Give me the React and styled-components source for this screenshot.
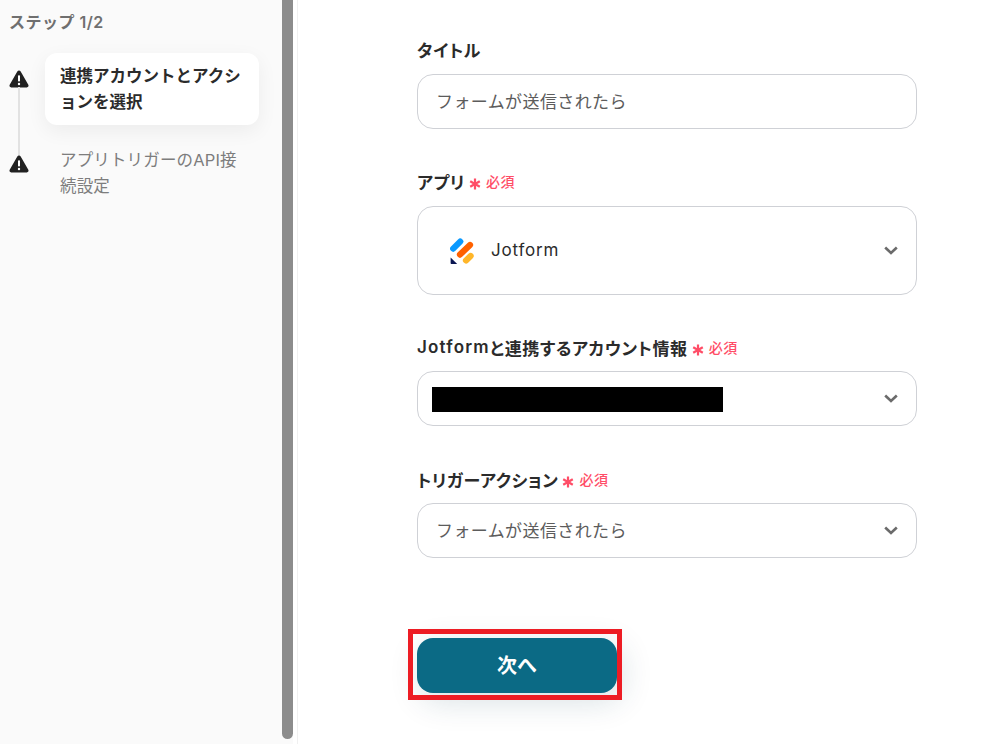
import React from 'react'
import styled, { createGlobalStyle } from 'styled-components'

const GlobalStyle = createGlobalStyle`
    html, body {
        margin: 0;
        padding: 0;
        height: 744px;
        overflow: hidden;
        background: #fff;
        font-family: "Inter", "Noto Sans CJK JP", sans-serif;
    }
`

function Warning() {
    return (
        <WarnIcon viewBox="0 0 20 18">
            <path d="M10 .6c.7 0 1.3.4 1.7 1l7.6 13.2c.7 1.2-.1 2.6-1.5 2.6H2.2C.8 17.4 0 16 .7 14.8L8.3 1.6c.4-.6 1-1 1.7-1z" fill="#212121" />
            <rect x="9" y="5.2" width="2" height="6.4" rx="0.8" fill="#fff" />
            <circle cx="10" cy="14" r="1.2" fill="#fff" />
        </WarnIcon>
    )
}

function Chevron() {
    return (
        <ChevronIcon viewBox="0 0 14 9">
            <path d="M1.2 1.5 7 7l5.8-5.5" fill="none" stroke="#6b6b6b" strokeWidth="2.6" />
        </ChevronIcon>
    )
}

function JotformLogo() {
    return (
        <svg width="24" height="26" viewBox="0 0 24 26">
            <line x1="3.2" y1="10.6" x2="10.2" y2="3.6" stroke="#0a99ff" strokeWidth="6.2" strokeLinecap="round" />
            <line x1="10" y1="16.6" x2="20" y2="7" stroke="#ff6100" strokeWidth="6.2" strokeLinecap="round" />
            <line x1="16" y1="22.4" x2="20.6" y2="18" stroke="#ffb629" strokeWidth="6.2" strokeLinecap="round" />
            <path d="M.6 19.6 7.2 26H1.6C1 26 .6 25.6 .6 25z" fill="#0a1551" />
        </svg>
    )
}

function Required() {
    return (
        <>
            <StarIcon viewBox="0 0 12 12">
                <path d="M6 .4v11.2M1.2 3.2l9.6 5.6M10.8 3.2l-9.6 5.6" stroke="#ff4d67" strokeWidth="2.2" fill="none" />
            </StarIcon>
            <RequiredText>必須</RequiredText>
        </>
    )
}

export default function App() {
    return (
        <>
            <GlobalStyle />
            <Page>
                <Sidebar>
                    <StepTitle>ステップ 1/2</StepTitle>
                    <Steps>
                        <Step>
                            <IconCol $top={17} $line>
                                <Warning />
                            </IconCol>
                            <ActiveLabel>連携アカウントとアクションを選択</ActiveLabel>
                        </Step>
                        <Step>
                            <IconCol $top={8}>
                                <Warning />
                            </IconCol>
                            <StepLabel>アプリトリガーのAPI接続設定</StepLabel>
                        </Step>
                    </Steps>
                </Sidebar>
                <ScrollTrack>
                    <ScrollThumb />
                </ScrollTrack>
                <Main>
                    <Form>
                        <Field $mb={41}>
                            <Label $gap={14}>タイトル</Label>
                            <Box $h={55}>
                                <BoxText>フォームが送信されたら</BoxText>
                            </Box>
                        </Field>
                        <Field $mb={41}>
                            <Label $gap={14}>アプリ<Required /></Label>
                            <Box $h={89}>
                                <AppRow>
                                    <JotformLogo />
                                    <AppName>Jotform</AppName>
                                </AppRow>
                                <Chevron />
                            </Box>
                        </Field>
                        <Field $mb={42}>
                            <Label $gap={13}><LatinText>Jotform</LatinText>と連携するアカウント情報<Required /></Label>
                            <Box $h={55} $tight>
                                <Redacted />
                                <Chevron />
                            </Box>
                        </Field>
                        <Field $mb={80}>
                            <Label $gap={13}>トリガーアクション<Required /></Label>
                            <Box $h={55}>
                                <BoxText>フォームが送信されたら</BoxText>
                                <Chevron />
                            </Box>
                        </Field>
                        <ButtonWrap>
                            <NextButton>次へ</NextButton>
                            <Highlight />
                        </ButtonWrap>
                    </Form>
                </Main>
            </Page>
        </>
    )
}

const Page = styled.div`
    display: flex;
    width: 996px;
    height: 744px;
    overflow: hidden;
`

const Sidebar = styled.aside`
    width: 282px;
    flex-shrink: 0;
    box-sizing: border-box;
    background: #fafafa;
    padding: 11px 0 0 9px;
`

const StepTitle = styled.div`
    font-size: 16px;
    line-height: 22px;
    font-weight: 600;
    letter-spacing: 0.5px;
    color: #6f6f6f;
`

const Steps = styled.div`
    display: flex;
    flex-direction: column;
    gap: 22px;
    margin-top: 20px;
`

const Step = styled.div`
    display: flex;
    align-items: flex-start;
`

const IconCol = styled.div`
    position: relative;
    width: 20px;
    margin-right: 16px;
    flex-shrink: 0;
    padding-top: ${(p) => p.$top}px;
    display: flex;
    justify-content: center;

    ${(p) => p.$line && `
        &::after {
            content: '';
            position: absolute;
            left: 9px;
            top: 34px;
            width: 2px;
            height: 70px;
            background: #e2e2e2;
        }
    `}
`

const WarnIcon = styled.svg`
    width: 20px;
    height: 18px;
    display: block;
`

const ActiveLabel = styled.div`
    width: 214px;
    height: 72px;
    box-sizing: border-box;
    padding: 10px 15px;
    background: #fff;
    border-radius: 12px;
    box-shadow: 0 6px 20px rgba(0, 0, 0, 0.06);
    font-size: 16.5px;
    line-height: 26px;
    font-weight: 600;
    color: #2b2b2b;
`

const StepLabel = styled.div`
    width: 214px;
    box-sizing: border-box;
    padding: 0 15px;
    font-size: 16.5px;
    line-height: 26px;
    letter-spacing: 0.15px;
    color: #7d7d7d;
`

const ScrollTrack = styled.div`
    width: 11px;
    flex-shrink: 0;
    background: #fafafa;
`

const ScrollThumb = styled.div`
    width: 11px;
    height: 739px;
    background: #8c8c8c;
    border-radius: 0 0 6px 6px;
`

const Main = styled.main`
    flex: 1;
    margin-left: 4px;
    border-left: 1px solid #f0f0f0;
    padding: 38px 0 0 119px;
`

const Form = styled.div`
    width: 500px;
    display: flex;
    flex-direction: column;
`

const Field = styled.div`
    margin-bottom: ${(p) => p.$mb}px;
`

const Label = styled.div`
    display: flex;
    align-items: center;
    height: 22px;
    margin-bottom: ${(p) => p.$gap}px;
    font-size: 17px;
    font-weight: 600;
    font-feature-settings: "palt";
    letter-spacing: 0.6px;
    color: #2b2b2b;
`

const LatinText = styled.span`
    letter-spacing: 1.2px;
`

const StarIcon = styled.svg`
    width: 12px;
    height: 12px;
    margin: 5px 0 0 4px;
    flex-shrink: 0;
`

const RequiredText = styled.span`
    margin-left: 5px;
    font-size: 14px;
    font-weight: 500;
    letter-spacing: 0.6px;
    color: #ff4d67;
`

const Box = styled.div`
    height: ${(p) => p.$h}px;
    box-sizing: border-box;
    border: 1px solid #cfd1d6;
    border-radius: 16px;
    display: flex;
    align-items: center;
    justify-content: space-between;
    padding: 0 18px 0 ${(p) => (p.$tight ? 14 : 18)}px;
    background: #fff;
`

const BoxText = styled.span`
    font-size: 17px;
    letter-spacing: 0.4px;
    color: #5c5c5c;
    padding-bottom: 2px;
`

const AppRow = styled.div`
    display: flex;
    align-items: center;
    gap: 17px;
    padding-left: 14px;
`

const AppName = styled.span`
    font-size: 17px;
    letter-spacing: 0.8px;
    color: #2b2b2b;
    padding-bottom: 2px;
`

const Redacted = styled.div`
    width: 291px;
    height: 25px;
    margin-top: 2px;
    background: #000;
`

const ChevronIcon = styled.svg`
    width: 14px;
    height: 9px;
    display: block;
`

const ButtonWrap = styled.div`
    position: relative;
    width: 200px;
    height: 55px;
`

const NextButton = styled.button`
    display: block;
    width: 100%;
    height: 100%;
    padding: 0 0 2px;
    border: none;
    border-radius: 16px;
    background: #0b6a85;
    color: #fff;
    font-family: inherit;
    font-size: 20px;
    font-weight: 700;
    box-shadow: 4px 8px 32px rgba(11, 60, 80, 0.16);
`

const Highlight = styled.div`
    position: absolute;
    left: -9px;
    top: -9px;
    width: 214px;
    height: 71px;
    box-sizing: border-box;
    border: 5px solid #ed1c24;
    pointer-events: none;
`
